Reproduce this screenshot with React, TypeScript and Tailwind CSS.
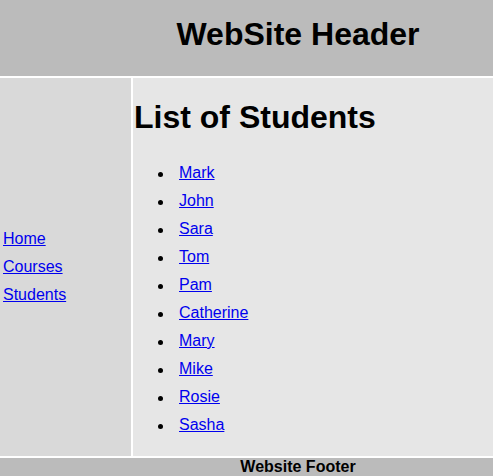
import React from 'react';

const navLinks = ['Home', 'Courses', 'Students'];

const students = ['Mark', 'John', 'Sara', 'Tom', 'Pam', 'Catherine', 'Mary', 'Mike', 'Rosie', 'Sasha'];

export default function App() {
  return (
    <div className="w-[493px] h-[476px] overflow-hidden bg-white flex flex-col gap-[2px] font-['Liberation_Sans',Arial,sans-serif] text-black">
      {/* Header */}
      <header className="h-[76px] shrink-0 bg-[#bbbbbb] flex justify-center pl-[103px] pt-[16px]">
        <h1 className="text-[32px] font-bold leading-[37px] m-0">WebSite Header</h1>
      </header>

      {/* Middle row: nav + content */}
      <div className="h-[378px] shrink-0 flex gap-[2px]">
        <nav className="w-[131px] shrink-0 bg-[#d9d9d9] flex flex-col justify-center pl-[3px]">
          {navLinks.map((link) => (
            <a key={link} href="#" className="text-[16px] leading-[28px] text-[#0000ee] underline">
              {link}
            </a>
          ))}
        </nav>

        <main className="flex-1 bg-[#e6e6e6] pl-[1px]">
          <h1 className="text-[32px] font-bold leading-[37px] mt-[21px] mb-[23px]">List of Students</h1>
          <ul className="list-none pl-[24px] m-0">
            {students.map((name) => (
              <li key={name} className="flex items-center text-[16px] leading-[28px]">
                <span className="w-[5px] h-[5px] mt-[2px] mr-[16px] rounded-full bg-black shrink-0" />
                <a href="#" className="text-[#0000ee] underline">
                  {name}
                </a>
              </li>
            ))}
          </ul>
        </main>
      </div>

      {/* Footer */}
      <footer className="h-[30px] shrink-0 bg-[#bbbbbb] flex justify-center pl-[103px]">
        <span className="text-[16px] font-bold leading-[18px]">Website Footer</span>
      </footer>
    </div>
  );
}
